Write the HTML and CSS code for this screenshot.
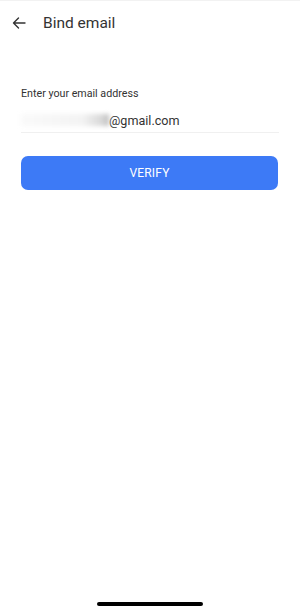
FILE: index.html
```html
<!DOCTYPE html>
<html lang="en">
<head>
  <meta charset="UTF-8">
  <title>Bind email</title>
  <link rel="stylesheet" href="styles.css">
</head>
<body>
  <div class="screen">
    <header class="topbar">
      <button class="back" type="button" aria-label="Back">
        <svg width="14" height="12" viewBox="0 0 14 12"><path d="M13 6H1.5M6.5 1L1.5 6l5 5" fill="none" stroke="#333" stroke-width="1.4" stroke-linecap="round" stroke-linejoin="round"/></svg>
      </button>
      <h1>Bind email</h1>
    </header>

    <form class="form" id="bindForm">
      <label class="label" for="email">Enter your email address</label>
      <div class="field">
        <span class="blur"></span>
        <span class="domain">@gmail.com</span>
      </div>
      <button class="verify" type="submit">VERIFY</button>
    </form>

    <div class="home-bar"></div>
  </div>
</body>
</html>
```

FILE: styles.css
```css
* {
  box-sizing: border-box;
}
body {
  margin: 0;
  font-family: Roboto, "Liberation Sans", Arial, sans-serif;
  background: #fff;
  color: #333;
}
.screen {
  height: 613px;
  display: flex;
  flex-direction: column;
  border-top: 1px solid #f2f2f2;
}
.topbar {
  display: flex;
  align-items: center;
  height: 44px;
  padding: 0 12px;
}
.back {
  border: none;
  background: none;
  padding: 0;
  width: 14px;
  height: 12px;
  display: flex;
  margin-right: 17px;
}
.topbar h1 {
  margin: 0;
  font-size: 15.5px;
  font-weight: 400;
  color: #333;
}
.form {
  padding: 42px 21px 0 21px;
}
.label {
  display: block;
  font-size: 10.7px;
  color: #333;
  margin-bottom: 8px;
}
.field {
  display: flex;
  align-items: center;
  height: 25px;
  border-bottom: 1px solid #f0f0f0;
}
.blur {
  width: 88px;
  height: 12px;
  background: linear-gradient(to right, #fafafa 0%, #f3f3f3 70%, #d8d8d8 92%, #bdbdbd 100%);
  filter: blur(2px);
}
.domain {
  font-size: 12.6px;
  color: #333;
}
.verify {
  display: block;
  width: 257px;
  height: 34px;
  margin-top: 23px;
  border: none;
  border-radius: 7px;
  background: #3d7af6;
  color: #fff;
  font-family: inherit;
  font-size: 12px;
  letter-spacing: 0.2px;
}
.home-bar {
  margin: auto auto 7px;
  width: 106px;
  height: 4px;
  border-radius: 2px;
  background: #000;
}
```
